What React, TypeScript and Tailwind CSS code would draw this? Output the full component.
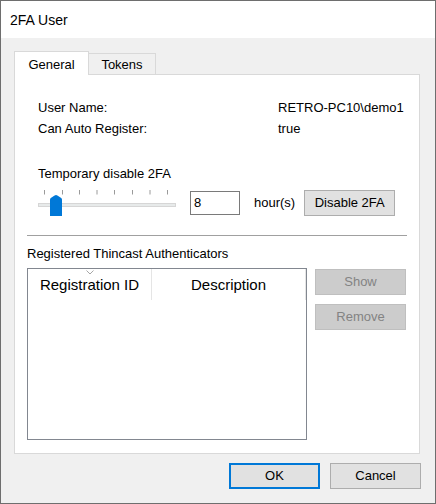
const font = { fontFamily: '"Liberation Sans", Arial, sans-serif' };

function TrackBar() {
  const ticks = [6.5, 24.5, 41.5, 59, 76.5, 94.5, 112, 129.5];
  return (
    <svg width="140" height="27" viewBox="0 0 140 27" className="block shrink-0">
      {ticks.map((x, i) => (
        <line key={i} x1={x} y1="0" x2={x} y2="4.5" stroke="#9a9a9a" strokeWidth="1" />
      ))}
      <rect x="0.5" y="13.5" width="137" height="3" fill="#e7eaea" stroke="#d6d6d6" />
      <path d="M12 26 L12 9.5 Q12 8.6 12.8 8 L16.6 5.4 Q18 4.6 19.4 5.4 L23.2 8 Q24 8.6 24 9.5 L24 26 Z" fill="#0078d7" />
    </svg>
  );
}

function WinButton({
  children,
  disabled,
  primary,
  className = "",
}: {
  children: React.ReactNode;
  disabled?: boolean;
  primary?: boolean;
  className?: string;
}) {
  const look = disabled
    ? "bg-[#cccccc] border border-[#bfbfbf] text-[#838383]"
    : primary
      ? "bg-[#e1e1e1] border-2 border-[#0078d7] text-black"
      : "bg-[#e1e1e1] border border-[#adadad] text-black";
  return (
    <div
      className={`flex h-[26px] w-[91px] shrink-0 items-center justify-center text-[13px] leading-[16px] ${look} ${className}`}
    >
      {children}
    </div>
  );
}

export default function App() {
  return (
    <div
      style={font}
      className="flex h-[504px] w-[436px] flex-col border border-[#6e6e6e] bg-[#f0f0f0] text-[13px] leading-[16px] text-black"
    >
      {/* title bar */}
      <div className="h-[37px] shrink-0 bg-white pl-[9px] pt-[11px] text-[14px] leading-[17px]">
        2FA User
      </div>

      <div className="flex flex-1 flex-col pl-[13px] pr-[14px] pt-[13px]">
        {/* tabs */}
        <div className="flex h-[23px] items-end">
          <div className="relative z-10 -mb-px flex h-[24px] w-[75px] items-start justify-center border border-b-0 border-[#d9d9d9] bg-white pt-[5px]">
            General
          </div>
          <div className="flex h-[21px] w-[67px] items-start justify-center border border-b-0 border-l-0 border-[#d9d9d9] bg-[#f0f0f0] pt-[3px]">
            Tokens
          </div>
        </div>

        {/* tab page */}
        <div className="flex h-[380px] w-[406px] flex-col border border-[#d9d9d9] bg-white pt-[25px]">
          <div className="ml-[23px] grid grid-cols-[240px_1fr] gap-y-[5px]">
            <div>User Name:</div>
            <div>RETRO-PC10\demo1</div>
            <div>Can Auto Register:</div>
            <div>true</div>
          </div>

          <div className="ml-[23px] mt-[29px]">Temporary disable 2FA</div>

          <div className="ml-[23px] mt-[8px] flex h-[26px] items-start">
            <TrackBar />
            <div className="ml-[12px] mt-px flex h-[24px] w-[50px] items-center border border-[#7a7a7a] bg-white pl-[3px]">
              8
            </div>
            <div className="ml-[14px] mt-[5px]">hour(s)</div>
            <WinButton className="ml-[9px]">Disable 2FA</WinButton>
          </div>

          <div className="mx-[12px] mt-[19px] h-px bg-[#a0a0a0]" />

          <div className="ml-[12px] mt-[10px]">Registered Thincast Authenticators</div>

          <div className="ml-[12px] mt-[6px] flex gap-[8px]">
            <div className="h-[172px] w-[280px] border border-[#828790] bg-white">
              <div className="flex h-[31px] text-[15px] leading-[18px]">
                <div className="relative flex w-[124px] items-center justify-center border-r border-[#e5e5e5]">
                  <svg width="8" height="5" viewBox="0 0 8 5" className="absolute left-[58px] top-[1px]">
                    <path d="M0.5 0.5 L4 4 L7.5 0.5" fill="none" stroke="#a6a6a6" strokeWidth="1" />
                  </svg>
                  Registration ID
                </div>
                <div className="flex w-[154px] items-center justify-center border-r border-[#e5e5e5]">
                  Description
                </div>
              </div>
            </div>
            <div className="flex flex-col gap-[9px] pt-px">
              <WinButton disabled>Show</WinButton>
              <WinButton disabled>Remove</WinButton>
            </div>
          </div>
        </div>

        {/* dialog buttons */}
        <div className="mt-[9px] flex justify-end gap-[10px]">
          <WinButton primary>OK</WinButton>
          <WinButton>Cancel</WinButton>
        </div>
      </div>
    </div>
  );
}
